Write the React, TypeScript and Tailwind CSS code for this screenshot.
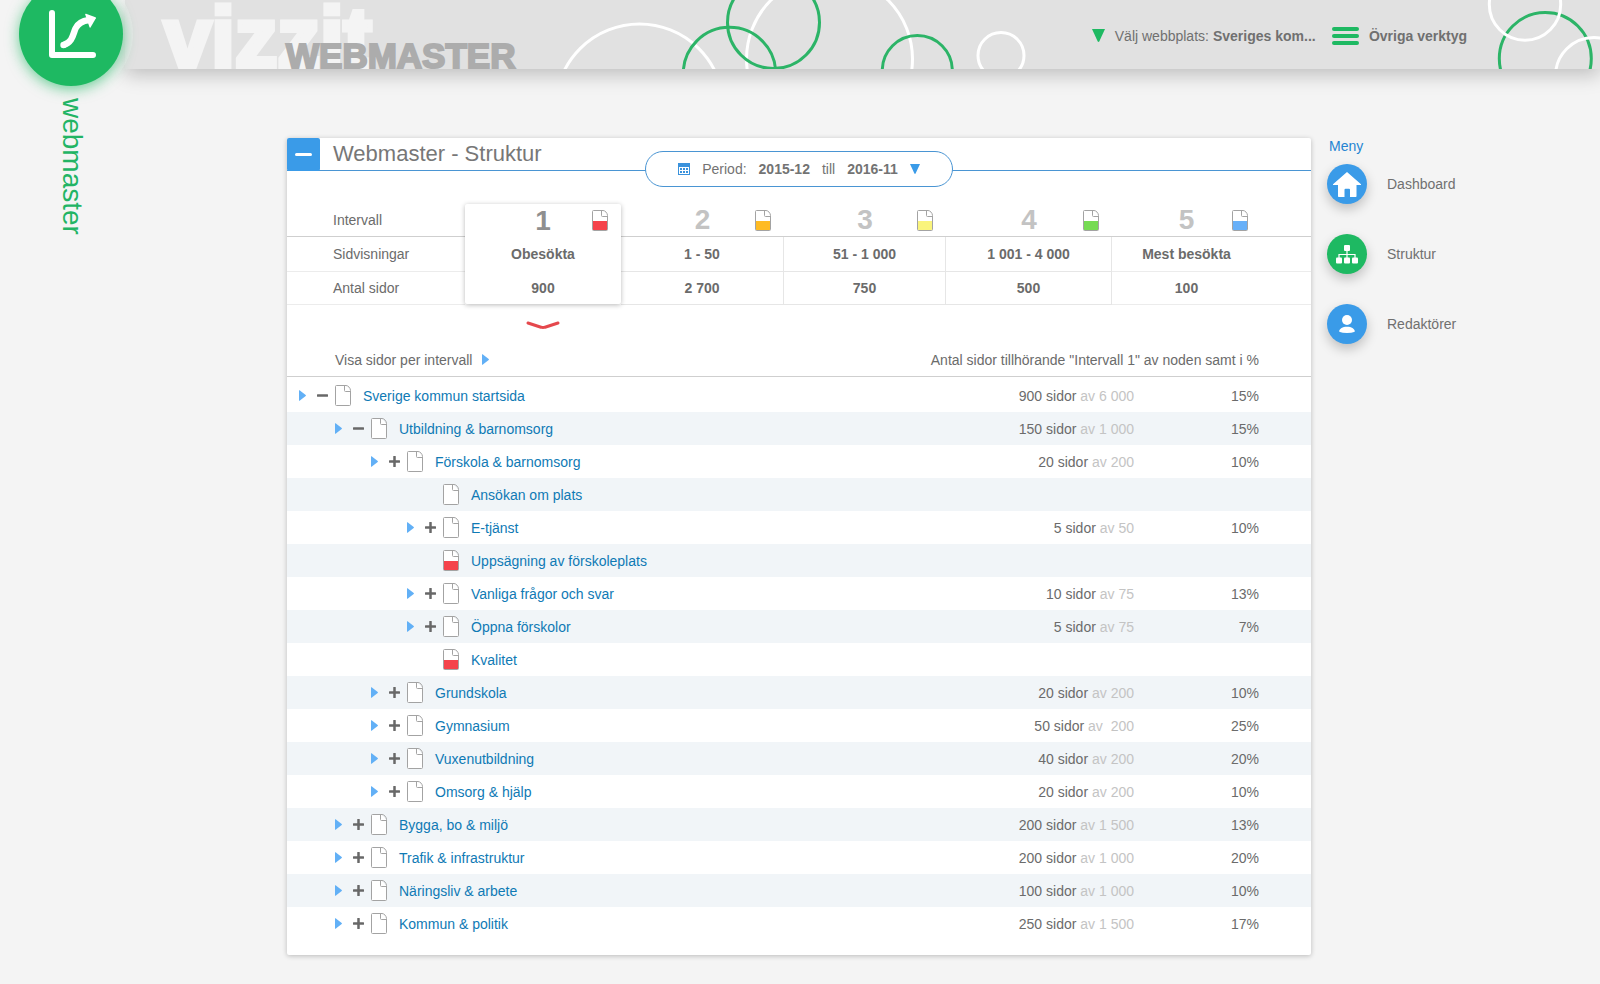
import { useState } from "react";

type Node = {
  name: string;
  level: number;
  state?: "open" | "closed";
  marked?: boolean;
  count?: string;
  total?: string;
  percent?: string;
};

const nodes: Node[] = [
  { name: "Sverige kommun startsida", level: 0, state: "open", count: "900", total: "6 000", percent: "15%" },
  { name: "Utbildning & barnomsorg", level: 1, state: "open", count: "150", total: "1 000", percent: "15%" },
  { name: "Förskola & barnomsorg", level: 2, state: "closed", count: "20", total: "200", percent: "10%" },
  { name: "Ansökan om plats", level: 3 },
  { name: "E-tjänst", level: 3, state: "closed", count: "5", total: "50", percent: "10%" },
  { name: "Uppsägning av förskoleplats", level: 3, marked: true },
  { name: "Vanliga frågor och svar", level: 3, state: "closed", count: "10", total: "75", percent: "13%" },
  { name: "Öppna förskolor", level: 3, state: "closed", count: "5", total: "75", percent: "7%" },
  { name: "Kvalitet", level: 3, marked: true },
  { name: "Grundskola", level: 2, state: "closed", count: "20", total: "200", percent: "10%" },
  { name: "Gymnasium", level: 2, state: "closed", count: "50", total: "\u00a0200", percent: "25%" },
  { name: "Vuxenutbildning", level: 2, state: "closed", count: "40", total: "200", percent: "20%" },
  { name: "Omsorg & hjälp", level: 2, state: "closed", count: "20", total: "200", percent: "10%" },
  { name: "Bygga, bo & miljö", level: 1, state: "closed", count: "200", total: "1 500", percent: "13%" },
  { name: "Trafik & infrastruktur", level: 1, state: "closed", count: "200", total: "1 000", percent: "20%" },
  { name: "Näringsliv & arbete", level: 1, state: "closed", count: "100", total: "1 000", percent: "10%" },
  { name: "Kommun & politik", level: 1, state: "closed", count: "250", total: "1 500", percent: "17%" },
];

const indents = ["pl-3", "pl-12", "pl-21", "pl-30"];

const intervals = [
  { label: "1", views: "Obesökta", pages: "900", color: "#f5434b" },
  { label: "2", views: "1 - 50", pages: "2 700", color: "#ffbb22" },
  { label: "3", views: "51 - 1 000", pages: "750", color: "#faf47c" },
  { label: "4", views: "1 001 - 4 000", pages: "500", color: "#76db53" },
  { label: "5", views: "Mest besökta", pages: "100", color: "#68b0f8" },
];

function PageIcon({ fill }: { fill?: string }) {
  return (
    <svg width="16" height="21" viewBox="0 0 16 21" className="shrink-0" aria-hidden="true">
      <path d="M1.5.5h9l5 5.500v13.500a1 1 0 0 1-1 1h-13a1 1 0 0 1-1-1v-18a1 1 0 0 1 1-1z" fill="#fff" />
      {fill && <path d="M1 11h14v9H1z" fill={fill} />}
      <path
        d="M1.500.5H11c2 0 4.500 2.500 4.500 5v14a1 1 0 0 1-1 1h-13a1 1 0 0 1-1-1v-18a1 1 0 0 1 1-1zM9.500.5v5a1 1 0 0 0 1 1h5"
        fill="none"
        stroke="#a3a3a3"
      />
    </svg>
  );
}

function RightArrow() {
  return (
    <svg width="7" height="11" viewBox="0 0 7 11" aria-hidden="true">
      <path d="M0 .6Q0 0 .6.200L6.700 5q.5.5 0 1L.6 10.800Q0 11 0 10.400z" fill="#62b0f6" />
    </svg>
  );
}

function DownArrow({ className }: { className: string }) {
  return (
    <svg viewBox="0 0 12 12" preserveAspectRatio="none" className={className} aria-hidden="true">
      <path d="M0 0h12L6.700 11.500q-.7.8-1.400 0z" fill="currentColor" />
    </svg>
  );
}

function Header() {
  return (
    <header className="relative flex h-[69px] items-center justify-end bg-[#e1e1e1] pt-0.5 pr-[133px] shadow-[0_6px_18px_rgba(0,0,0,0.22)]">
      <div className="absolute inset-0 overflow-hidden" aria-hidden="true">
        <svg width="950" height="69" viewBox="125 0 950 69" className="absolute top-0 left-0" fill="none" strokeWidth="3">
          <circle cx="639.5" cy="108" r="84" stroke="#fff" />
          <circle cx="829.5" cy="59" r="83" stroke="#fff" />
          <circle cx="1001" cy="55.500" r="23" stroke="#fff" />
          <circle cx="729.5" cy="73.500" r="46.200" stroke="#2cb467" />
          <circle cx="773.5" cy="22.500" r="46" stroke="#2cb467" />
          <circle cx="917.3" cy="70.500" r="35" stroke="#2cb467" />
        </svg>
        <svg width="130" height="69" viewBox="1470 0 130 69" className="absolute top-0 right-0" fill="none" strokeWidth="3">
          <circle cx="1545.3" cy="58.500" r="46" stroke="#2cb467" />
          <circle cx="1525" cy="4.500" r="35.700" stroke="#fff" />
          <circle cx="1594" cy="76" r="38.500" stroke="#fff" />
        </svg>
      </div>
      <div className="absolute inset-y-0 left-0 w-[450px] overflow-hidden font-bold whitespace-nowrap">
        <span className="absolute top-0 left-[39px] text-[85px] leading-[75px] text-[#f4f4f4] [-webkit-text-stroke:5px_#f4f4f4]">
          vizzit
        </span>
        <span className="absolute bottom-0 left-[161px] text-[35px] leading-[26px] text-[#acacac] [-webkit-text-stroke:2px_#acacac]">
          WEBMASTER
        </span>
      </div>
      <div className="relative flex items-center text-[14px] leading-4 text-[#707070]">
        <DownArrow className="mr-[10px] h-[13px] w-[13px] text-[#1eb962]" />
        <label htmlFor="site" className="mr-1 whitespace-nowrap">
          Välj webbplats:
        </label>
        <select id="site" className="mr-4 appearance-none bg-transparent p-0 font-bold">
          <option>Sveriges kom...</option>
        </select>
        <button className="flex items-center gap-[10px] font-bold whitespace-nowrap">
          <span className="flex w-[27px] flex-col gap-[3px]">
            <span className="h-1 rounded-xs bg-[#1eb962]" />
            <span className="h-1 rounded-xs bg-[#1eb962]" />
            <span className="h-1 rounded-xs bg-[#1eb962]" />
          </span>
          Övriga verktyg
        </button>
      </div>
    </header>
  );
}

function IntervalTable() {
  return (
    <table className="mt-[33px] w-full table-fixed border-separate border-spacing-0 text-center text-[14px] leading-4">
      <colgroup>
        <col className="w-[178px]" />
        <col className="w-[156px]" />
        <col className="w-[163px]" />
        <col className="w-[162px]" />
        <col className="w-[166px]" />
        <col className="w-[149px]" />
        <col className="w-[50px]" />
      </colgroup>
      <thead>
        <tr className="h-[33px]">
          <th scope="row" className="border-b border-[#cfcfcf] pl-[46px] text-left font-normal">
            Intervall
          </th>
          {intervals.map((it, i) => (
            <th key={it.label} scope="col" className={i === 0 ? "relative" : "border-b border-[#cfcfcf]"}>
              {i === 0 && (
                <span className="absolute inset-x-0 top-0 h-[100px] rounded-xs bg-white shadow-[0_1px_5px_rgba(0,0,0,0.28)]" />
              )}
              <span className="relative grid grid-cols-[1fr_auto_1fr] items-center px-[13px]">
                <span
                  className={
                    i === 0
                      ? "col-start-2 text-[28px] leading-7 text-[#8f8f8f]"
                      : "col-start-2 text-[28px] leading-7 text-[#c3c3c3]"
                  }
                >
                  {it.label}
                </span>
                <span className="justify-self-end">
                  <PageIcon fill={it.color} />
                </span>
              </span>
            </th>
          ))}
          <td className="border-b border-[#cfcfcf]" />
        </tr>
      </thead>
      <tbody>
        {(["views", "pages"] as const).map((key) => (
          <tr key={key} className={key === "views" ? "h-[35px]" : "h-[33px]"}>
            <th scope="row" className="border-b border-[#ececec] pl-[46px] text-left font-normal">
              {key === "views" ? "Sidvisningar" : "Antal sidor"}
            </th>
            {intervals.map((it, i) => (
              <td
                key={it.label}
                className={
                  i === 0
                    ? "relative z-10 border-b border-transparent font-bold"
                    : i === 4
                      ? "border-b border-[#ececec] font-bold"
                      : "border-r border-b border-[#e6e6e6] font-bold"
                }
              >
                {it[key]}
              </td>
            ))}
            <td className="border-b border-[#ececec]" />
          </tr>
        ))}
        <tr className="h-10">
          <td />
          <td>
            <svg width="34" height="9" viewBox="0 0 34 9" className="mx-auto" aria-hidden="true">
              <path d="M2 2l13 4.200q2 .7 4 0L32 2" fill="none" stroke="#e5484d" strokeWidth="3" strokeLinecap="round" />
            </svg>
          </td>
          <td colSpan={5} />
        </tr>
      </tbody>
    </table>
  );
}

function TreeTable() {
  return (
    <table className="w-full border-separate border-spacing-0 text-[14px] leading-4">
      <thead>
        <tr className="h-8">
          <th className="border-b border-[#cfcfcf] p-0 pb-0.5 text-left font-normal">
            <button className="flex items-center gap-[10px] pl-12">
              Visa sidor per intervall
              <RightArrow />
            </button>
          </th>
          <th colSpan={2} className="border-b border-[#cfcfcf] p-0 pr-[52px] pb-0.5 text-right font-normal">
            Antal sidor tillhörande "Intervall 1" av noden samt i %
          </th>
        </tr>
      </thead>
      <tbody className="[&>tr:first-child]:h-[35px] [&>tr:first-child>td]:pt-0.5">
        {nodes.map((n) => (
          <tr key={n.name} className="h-[33px] even:bg-[#f1f5f8]">
            <td className="p-0">
              <div className={`flex items-center ${indents[n.level]}`}>
                <span className="flex w-[18px]">
                  {n.state && (
                    <button aria-label={`Visa ${n.name}`}>
                      <RightArrow />
                    </button>
                  )}
                </span>
                <span className="flex w-[18px]">
                  {n.state && (
                    <button aria-label={n.state === "open" ? "Dölj undersidor" : "Visa undersidor"}>
                      <svg width="11" height="11" viewBox="0 0 11 11" aria-hidden="true">
                        <path
                          d={n.state === "open" ? "M.8 5.500h9.400" : "M.8 5.500h9.400M5.500.8v9.400"}
                          stroke="#686868"
                          strokeWidth="2.500"
                          strokeLinecap="round"
                        />
                      </svg>
                    </button>
                  )}
                </span>
                <PageIcon fill={n.marked ? "#f5434b" : undefined} />
                <a href="#" className="ml-3 text-[#0f7ab5]">
                  {n.name}
                </a>
              </div>
            </td>
            <td className="p-0 text-right">
              {n.count && (
                <>
                  {n.count} sidor <span className="text-[#c4c4c4]">av {n.total}</span>
                </>
              )}
            </td>
            <td className="w-[177px] p-0 pr-[52px] text-right">{n.percent}</td>
          </tr>
        ))}
      </tbody>
    </table>
  );
}

function SideMenu() {
  const circle = "flex size-10 items-center justify-center rounded-full text-white shadow-[0_5px_12px_rgba(0,0,0,0.22)]";
  return (
    <nav className="w-[289px] shrink-0 pl-4 text-[14px] leading-4 text-[#707070]">
      <p className="pl-0.5 text-[#2584d2]">Meny</p>
      <ul className="mt-[10px] flex flex-col gap-[30px]">
        <li>
          <a href="#" className="flex items-center gap-5">
            <span className={`${circle} bg-[#3a9be8]`}>
              <svg width="28" height="25" viewBox="0 0 28 25" fill="currentColor" aria-hidden="true">
                <path d="M14 0L28 12.200v.8h-4.500v11.200q0 .8-.8.800H17v-7.200q0-1-1-1h-3.500q-1 0-1 1V25H5.800q-.8 0-.8-.8V13H0v-.8z" />
              </svg>
            </span>
            Dashboard
          </a>
        </li>
        <li>
          <a href="#" className="flex items-center gap-5">
            <span className={`${circle} bg-[#1eb962]`}>
              <svg width="22" height="19" viewBox="0 0 22 19" fill="currentColor" aria-hidden="true">
                <rect x="8" width="6" height="6" rx="1" />
                <rect y="12.500" width="6" height="6" rx="1" />
                <rect x="8" y="12.500" width="6" height="6" rx="1" />
                <rect x="16" y="12.500" width="6" height="6" rx="1" />
                <path d="M11 6v7M3 13V9.500h16V13" fill="none" stroke="currentColor" strokeWidth="1.200" />
              </svg>
            </span>
            Struktur
          </a>
        </li>
        <li>
          <a href="#" className="flex items-center gap-5">
            <span className={`${circle} bg-[#3a9be8]`}>
              <svg width="16" height="18" viewBox="0 0 16 18" fill="currentColor" aria-hidden="true">
                <circle cx="8" cy="5" r="5" />
                <path d="M8 11.800c4.500 0 7.500 2 7.800 4.300q.1.800-.8 1-2 .9-7 .9t-7-.9q-.9-.2-.8-1C.5 13.800 3.500 11.800 8 11.800z" />
              </svg>
            </span>
            Redaktörer
          </a>
        </li>
      </ul>
    </nav>
  );
}

export default function App() {
  const [open, setOpen] = useState(true);
  return (
    <div className="flex min-h-screen bg-[#f4f4f4] font-['Liberation_Sans',Arial,sans-serif] text-[#6b6b6b]">
      <aside className="relative z-10 flex w-[125px] shrink-0 flex-col items-start pl-[19px]">
        <a
          href="#"
          aria-label="Vizzit"
          className="-mt-[18px] flex size-[104px] items-center justify-center rounded-full bg-[#1eb962] shadow-[0_3px_14px_rgba(30,185,98,0.65),0_0_0_10px_rgba(244,244,244,0.35)]"
        >
          <svg width="50" height="50" viewBox="0 0 50 50" className="ml-1" aria-hidden="true">
            <path d="M4 4v42h41" fill="none" stroke="#fff" strokeWidth="6" strokeLinecap="round" strokeLinejoin="round" />
            <path
              d="M15.500 36C25 33 25 25 27.500 19.500C30 14 34 12 41 11"
              fill="none"
              stroke="#fff"
              strokeWidth="6.500"
            />
            <circle cx="15.500" cy="36" r="3.200" fill="#fff" />
            <path d="M38 4.800l9.500 3.400q.8.300.4 1L42.500 18.500q-.6.600-1-.2L37.200 5.500q-.1-.9.800-.7z" fill="#fff" />
          </svg>
        </a>
        <p className="mt-3 ml-[37px] text-[28px] leading-8 text-[#22b464] [writing-mode:vertical-rl]">webmaster</p>
      </aside>
      <div className="min-w-0 flex-1">
        <Header />
        <div className="flex items-start pt-[69px] pb-[29px] pl-[162px]">
          <main className="min-w-0 flex-1 rounded-xs bg-white pb-[15px] shadow-[0_1px_5px_rgba(0,0,0,0.24)]">
            <div className="relative flex h-[33px] items-center border-b border-[#4a95d3]">
              <button
                aria-label={open ? "Fäll ihop" : "Fäll ut"}
                onClick={() => setOpen(!open)}
                className="flex size-[33px] shrink-0 items-center justify-center rounded-xs bg-[#3a9be8]"
              >
                <span className="h-[3px] w-[17px] rounded-full bg-white" />
              </button>
              <h1 className="ml-[13px] text-[22px] leading-7 text-[#777]">Webmaster - Struktur</h1>
              <button
                aria-haspopup="dialog"
                className="absolute top-[13px] left-1/2 flex h-9 w-[308px] -translate-x-1/2 items-center justify-center gap-3 rounded-full border border-[#4a95d3] bg-white text-[14px] leading-4 whitespace-nowrap text-[#737373]"
              >
                <svg width="12" height="12" viewBox="0 0 12 12" aria-hidden="true">
                  <path d="M0 0h12v12H0z" fill="#3a92dc" />
                  <path d="M1 4h10v7H1z" fill="#fff" />
                  <path d="M2 5h2v2H2zM5 5h2v2H5zM8 5h2v2H8zM2 8h2v2H2zM5 8h2v2H5zM8 8h2v2H8z" fill="#3a92dc" />
                </svg>
                <span>Period:</span>
                <strong>2015-12</strong>
                <span>till</span>
                <strong>2016-11</strong>
                <DownArrow className="h-[10px] w-[10px] text-[#3a9be8]" />
              </button>
            </div>
            {open && (
              <>
                <IntervalTable />
                <TreeTable />
              </>
            )}
          </main>
          <SideMenu />
        </div>
      </div>
    </div>
  );
}
